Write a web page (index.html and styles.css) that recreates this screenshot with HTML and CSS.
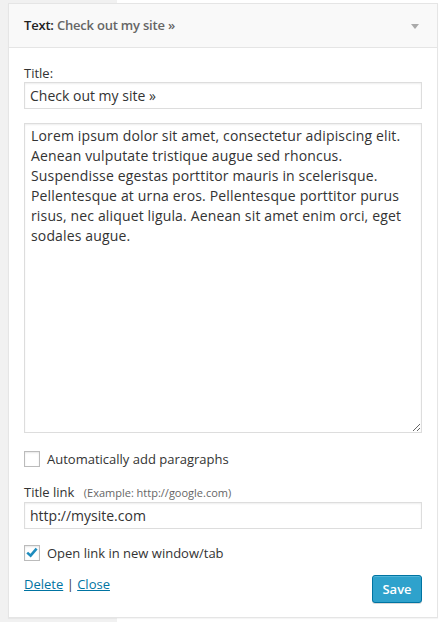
FILE: index.html
```html
<!DOCTYPE html>
<html>
<head>
<meta charset="utf-8">
<link rel="stylesheet" href="styles.css">
</head>
<body>
<div class="widget">
  <div class="widget-top">
    <h4 class="widget-title">Text:<span class="in-title"> Check out my site »</span></h4>
    <span class="toggle"></span>
  </div>
  <div class="widget-inside">
    <label class="label">Title:</label>
    <input class="field" type="text" value="Check out my site »">
    <textarea class="area">Lorem ipsum dolor sit amet, consectetur adipiscing elit. Aenean vulputate tristique augue sed rhoncus. Suspendisse egestas porttitor mauris in scelerisque. Pellentesque at urna eros. Pellentesque porttitor purus risus, nec aliquet ligula. Aenean sit amet enim orci, eget sodales augue.</textarea>
    <label class="check-row first"><span class="box"></span>Automatically add paragraphs</label>
    <label class="label link-label">Title link <small class="hint">(Example: http://google.com)</small></label>
    <input class="field" type="text" value="http://mysite.com">
    <label class="check-row second"><span class="box checked"><svg viewBox="0 0 16 16" width="16" height="16"><path d="M3.2 7.6 L6.6 10.6 L12.6 3.6" fill="none" stroke="#1e8cbe" stroke-width="2.6" stroke-linejoin="miter"/></svg></span>Open link in new window/tab</label>
    <div class="actions">
      <div class="links"><a href="#">Delete</a> | <a href="#">Close</a></div>
      <button class="save">Save</button>
    </div>
  </div>
</div>
</body>
</html>
```
FILE: styles.css
```css
html, body { margin: 0; padding: 0; }
body {
  background: linear-gradient(to right, #f1f1f1 0, #f1f1f1 117px, #fff 117px);
  font-family: "Open Sans", sans-serif;
  font-size: 13px;
  color: #333;
  height: 622px;
  overflow: hidden;
}
.widget {
  margin: 3px 0 0 8px;
  width: 430px;
  box-sizing: border-box;
  border: 1px solid #e5e5e5;
  background: #fff;
  box-shadow: 0 1px 1px rgba(0,0,0,0.04);
}
.widget-top {
  height: 43px;
  background: #f9f9f9;
  border-bottom: 1px solid #e5e5e5;
  display: flex;
  align-items: center;
  justify-content: space-between;
  padding: 0 15px;
}
.widget-title {
  margin: 0;
  font-size: 13px;
  font-weight: 600;
  color: #222;
  line-height: 1;
  letter-spacing: -0.2px;
}
.in-title { color: #666; }
.toggle {
  width: 0; height: 0;
  border-left: 4px solid transparent;
  border-right: 4px solid transparent;
  border-top: 5px solid #aaa;
  margin-right: 3px;
  margin-top: 2px;
}
.widget-inside {
  padding: 16px 15px 14px;
  display: flex;
  flex-direction: column;
}
.label { line-height: 18px; margin-bottom: 0; display: block; color: #333; }
.field {
  margin: 0;
  height: 27px;
  box-sizing: border-box;
  border: 1px solid #ddd;
  box-shadow: inset 0 1px 2px rgba(0,0,0,0.07);
  font-family: "Open Sans", sans-serif;
  font-size: 14px;
  color: #333;
  padding: 3px 5px;
  outline: none;
}
.area {
  margin-top: 14px;
  height: 310px;
  box-sizing: border-box;
  border: 1px solid #ddd;
  box-shadow: inset 0 1px 2px rgba(0,0,0,0.07);
  font-family: "Open Sans", sans-serif;
  font-size: 14px;
  line-height: 20px;
  letter-spacing: 0.15px;
  color: #333;
  padding: 2px 6px;
  resize: vertical;
  outline: none;
}
.check-row {
  display: flex;
  align-items: center;
  gap: 7px;
  line-height: 16px;
  color: #333;
}
.check-row.first { margin-top: 18px; }
.check-row.second { margin-top: 16px; }
.box {
  width: 16px; height: 16px;
  box-sizing: border-box;
  border: 1px solid #bbb;
  background: #fff;
  box-shadow: inset 0 1px 2px rgba(0,0,0,0.1);
  display: block;
  position: relative;
}
.box svg { position: absolute; left: -1px; top: -1px; }
.link-label { margin-top: 16px; margin-bottom: 0; }
.hint { font-size: 11px; color: #666; margin-left: 6px; }
.actions {
  display: flex;
  justify-content: space-between;
  align-items: flex-start;
  margin-top: 14px;
}
.links { line-height: 18px; margin-top: 0; color: #333; }
.links a { color: #0074a2; text-decoration: underline; }
.save {
  width: 50px;
  height: 28px;
  margin: 0;
  padding: 0;
  background: #2ea2cc;
  border: 1px solid #0074a2;
  border-radius: 3px;
  box-shadow: inset 0 1px 0 rgba(120,200,230,0.5), 0 1px 0 rgba(0,0,0,0.15);
  color: #fff;
  font-family: "Open Sans", sans-serif;
  font-size: 13px;
  font-weight: 600;
  cursor: pointer;
}
```
